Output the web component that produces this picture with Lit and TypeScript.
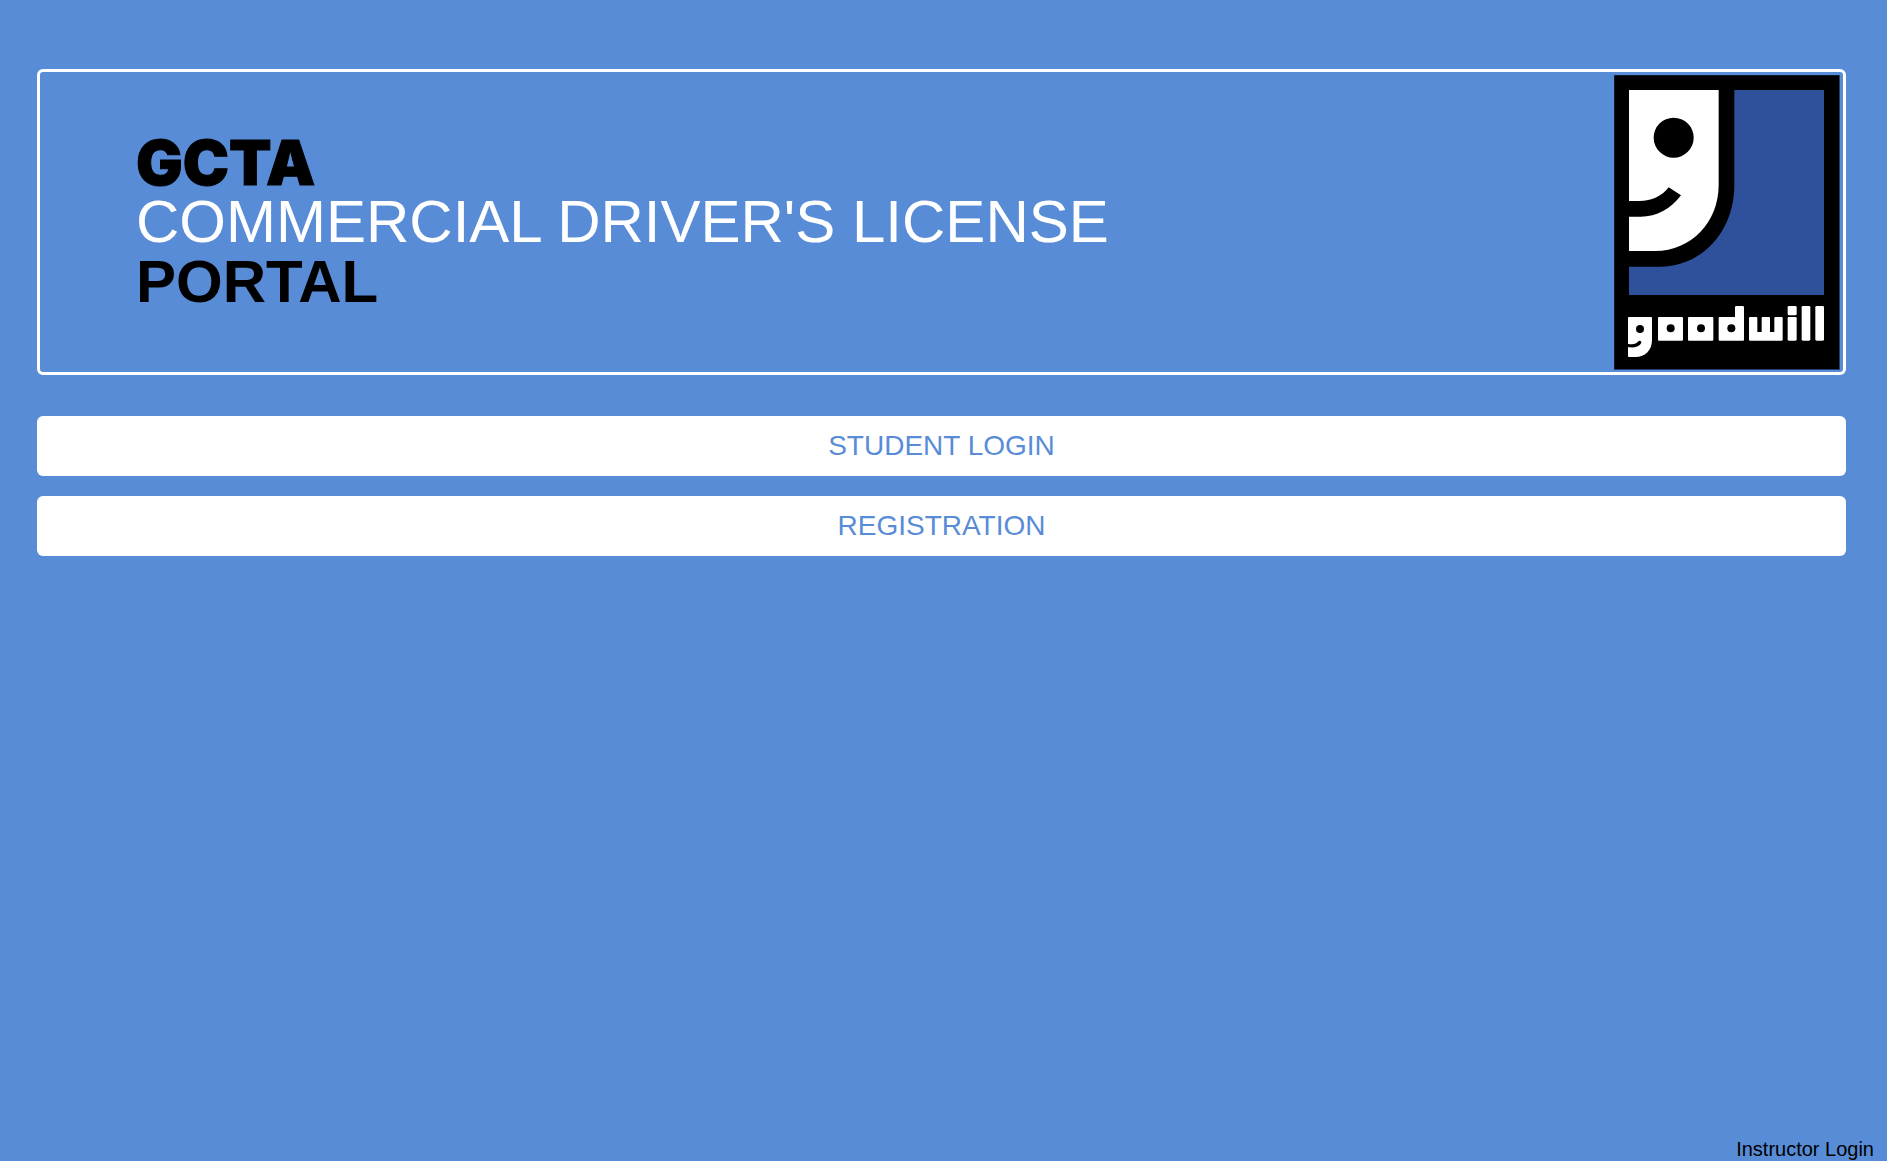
import { LitElement, html, css } from "lit";
import { customElement } from "lit/decorators.js";

@customElement("goodwill-logo")
class GoodwillLogo extends LitElement {
  static styles = css`
    :host { display: block; }
    .logo { display: block; width: 226px; height: 295px; }
    .black { fill: #000; }
    .edge { fill: #000; stroke: #2b4a85; stroke-width: 2; }
    .white { fill: #fff; }
    .navy { fill: #2f519b; }
  `;

  render() {
    return html`
      <svg class="logo" viewBox="42 45 678 885" role="img" aria-label="Goodwill">
        <rect class="edge" x="42" y="45" width="677" height="884" />
        <path class="navy" d="M403 90H672V705H87V620H180C305 620 403 515 403 375Z" />
        <path class="white" d="M87 90H356V375C356 485 275 573 165 573H87Z" />
        <circle class="black" cx="221" cy="233" r="60" />
        <path class="black" d="M80 423H118C155 423 185 409 206 382L243 406C213 447 170 470 122 470H80Z" />
        <path class="white" d="M87 771H153Q156 771 156 774V840C156 870 136 891 106 891H87Q84 891 84 888V774Q84 771 87 771Z" />
        <circle class="black" cx="120" cy="807" r="12" />
        <path class="black" d="M82 851C98 855 109 852 115 844Q119 840 123 844Q126 847 122 852C114 862 100 864 82 861Z" />
        <rect class="white" x="174" y="771" width="75" height="71" rx="3" />
        <circle class="black" cx="212" cy="805" r="12" />
        <rect class="white" x="264" y="771" width="76" height="71" rx="3" />
        <circle class="black" cx="303" cy="805" r="12" />
        <path class="white" d="M359 771H405V742Q405 738 409 738H428Q432 738 432 742V839Q432 842 429 842H359Q356 842 356 839V774Q356 771 359 771Z" />
        <circle class="black" cx="394" cy="805" r="12" />
        <path class="white" d="M450 771H469Q472 771 472 774V816H485V774Q485 771 488 771H507Q510 771 510 774V816H523V774Q523 771 526 771H545Q548 771 548 774V839Q548 842 545 842H450Q447 842 447 839V774Q447 771 450 771Z" />
        <rect class="white" x="563" y="738" width="27" height="28" rx="4" />
        <rect class="white" x="563" y="771" width="27" height="71" rx="4" />
        <rect class="white" x="605" y="738" width="26" height="104" rx="4" />
        <rect class="white" x="646" y="738" width="26" height="104" rx="4" />
      </svg>
    `;
  }
}

@customElement("app-root")
class AppRoot extends LitElement {
  static styles = css`
    :host {
      display: flex;
      flex-direction: column;
      box-sizing: border-box;
      min-height: 100vh;
      padding: 69px 0 0;
      background: #598cd7;
      font-family: "Liberation Sans", Arial, sans-serif;
    }
    .main { flex: 1; padding: 0 41px 0 37px; }
    .banner {
      display: flex;
      justify-content: space-between;
      align-items: center;
      margin-bottom: 41px;
      padding: 3px 3px 2px 96px;
      border: 3px solid #fff;
      border-radius: 6px;
    }
    .title {
      display: flex;
      flex-direction: column;
      margin: 0;
      color: #fff;
      font-size: 60px;
      line-height: 60px;
      font-weight: 400;
    }
    .org {
      color: #000;
      font-family: "Arial Black", Inter, "Liberation Sans", sans-serif;
      font-size: 62px;
      font-weight: 900;
      line-height: 58px;
      -webkit-text-stroke: 1px #000;
    }
    .portal { color: #000; font-weight: 700; }
    .actions { display: flex; flex-direction: column; gap: 20px; }
    .action {
      height: 60px;
      padding: 0;
      border: 0;
      border-radius: 6px;
      background: #fff;
      color: #598cd7;
      font-family: inherit;
      font-size: 28px;
      cursor: pointer;
    }
    .footer { display: flex; justify-content: flex-end; padding-right: 13px; }
    .instructor {
      color: #000;
      font-size: 20px;
      line-height: 23px;
      text-decoration: none;
    }
  `;

  render() {
    return html`
      <main class="main">
        <header class="banner">
          <h1 class="title">
            <span class="org">GCTA</span>
            <span>COMMERCIAL DRIVER'S LICENSE</span>
            <span class="portal">PORTAL</span>
          </h1>
          <goodwill-logo></goodwill-logo>
        </header>
        <nav class="actions">
          <button class="action" type="button">STUDENT LOGIN</button>
          <button class="action" type="button">REGISTRATION</button>
        </nav>
      </main>
      <footer class="footer">
        <a class="instructor" href="#instructor">Instructor Login</a>
      </footer>
    `;
  }
}
